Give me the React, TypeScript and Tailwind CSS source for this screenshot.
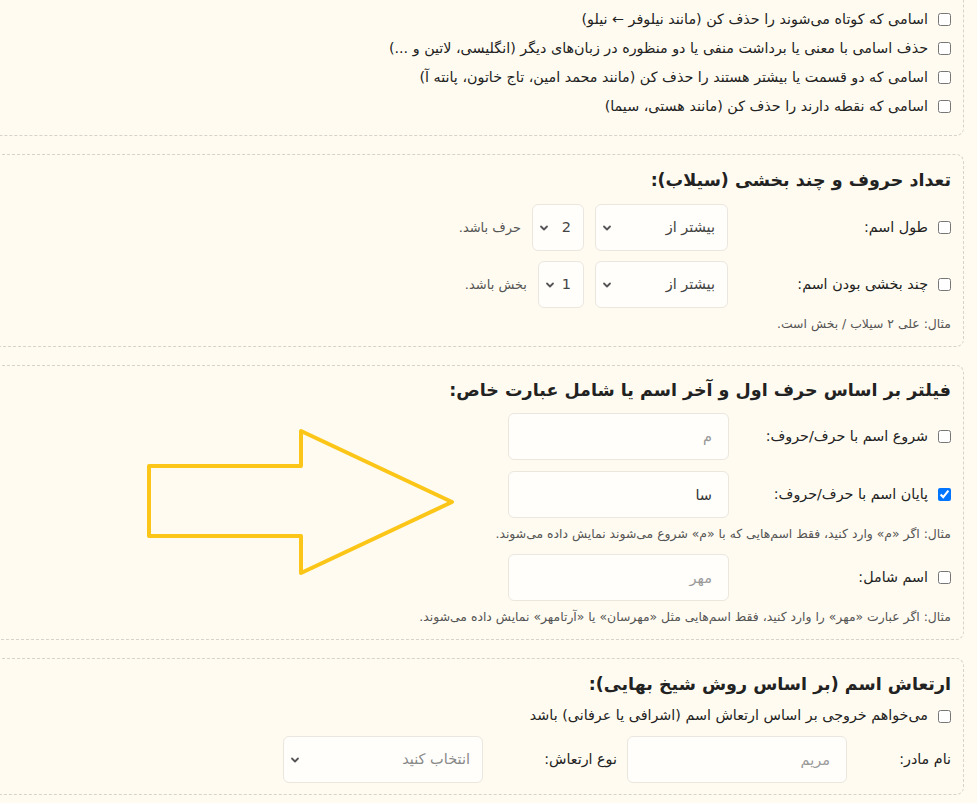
import React from 'react';

const Chevron = () => (
  <svg className="pointer-events-none absolute left-[7px] top-1/2 -translate-y-1/2 h-[10px] w-[10px] text-[#555]" viewBox="0 0 10 10" fill="none">
    <path d="M2 3.5 L5 6.5 L8 3.5" stroke="currentColor" strokeWidth="1.8" strokeLinecap="round" strokeLinejoin="round" />
  </svg>
);

function SelectBox({ value, width, placeholder }: { value: string; width: string; placeholder?: boolean }) {
  return (
    <div className={`relative ${width}`}>
      <select
        defaultValue={value}
        className={`appearance-none w-full h-[47px] rounded-md border border-[#ebe7df] bg-[#fffefb] pr-3 pl-6 text-[14.5px] outline-none ${
          placeholder ? 'text-[#888]' : 'text-[#444]'
        }`}
      >
        <option value={value}>{value}</option>
      </select>
      <Chevron />
    </div>
  );
}

function TextBox({ value, placeholder, width = 'w-[221px]' }: { value?: string; placeholder?: string; width?: string }) {
  return (
    <input
      type="text"
      defaultValue={value}
      placeholder={placeholder}
      className={`${width} h-[47px] rounded-md border border-[#ebe7df] bg-[#fffefb] pr-4 pl-3 text-[14.5px] text-[#333] placeholder:text-[#9a9a9a] outline-none`}
    />
  );
}

function Check({ checked }: { checked?: boolean }) {
  return <input type="checkbox" defaultChecked={checked} className="m-0 h-[13px] w-[13px] shrink-0" />;
}

const sectionCls = 'border border-dashed border-[#d6d3cc] rounded-lg px-3';

export default function App() {
  const removeOptions = [
    'اسامی که کوتاه می‌شوند را حذف کن (مانند نیلوفر ← نیلو)',
    'حذف اسامی با معنی یا برداشت منفی یا دو منظوره در زبان‌های دیگر (انگلیسی، لاتین و ...)',
    'اسامی که دو قسمت یا بیشتر هستند را حذف کن (مانند محمد امین، تاج خاتون، پانته آ)',
    'اسامی که نقطه دارند را حذف کن (مانند هستی، سیما)',
  ];

  return (
    <div
      dir="rtl"
      className="relative h-[803px] overflow-hidden bg-[#fffbf0] text-[#222] text-[14.3px]"
      style={{ fontFamily: '"DejaVu Sans", "Noto Sans", sans-serif' }}
    >
      <div className="w-[1010px] mr-[13px] flex flex-col gap-[18px]">
        {/* Remove options */}
        <section className={`${sectionCls} border-t-0 rounded-t-none pt-[5px] pb-[14px]`}>
          {removeOptions.map((text) => (
            <label key={text} className="flex items-center gap-2.5 h-[29px]">
              <Check />
              <span>{text}</span>
            </label>
          ))}
        </section>

        {/* Length and syllables */}
        <section className={`${sectionCls} pt-[12px] pb-[13px]`}>
          <h3 className="text-[17.5px] font-bold leading-[26px]">تعداد حروف و چند بخشی (سیلاب):</h3>
          <div className="mt-[11px] flex items-center gap-[11px]">
            <label className="flex items-center gap-2.5 w-[212px]">
              <Check />
              <span>طول اسم:</span>
            </label>
            <SelectBox value="بیشتر از" width="w-[133px]" />
            <SelectBox value="2" width="w-[52px]" />
            <span className="text-[13px] text-[#555]">حرف باشد.</span>
          </div>
          <div className="mt-[10px] flex items-center gap-[11px]">
            <label className="flex items-center gap-2.5 w-[212px]">
              <Check />
              <span>چند بخشی بودن اسم:</span>
            </label>
            <SelectBox value="بیشتر از" width="w-[133px]" />
            <SelectBox value="1" width="w-[46px]" />
            <span className="text-[13px] text-[#555]">بخش باشد.</span>
          </div>
          <p className="mt-[7px] text-[12.4px] leading-[18px] text-[#555]">مثال: علی ۲ سیلاب / بخش است.</p>
        </section>

        {/* First / last letter */}
        <section className={`${sectionCls} pt-[11px] pb-[13px]`}>
          <h3 className="text-[17.5px] font-bold leading-[26px]">فیلتر بر اساس حرف اول و آخر اسم یا شامل عبارت خاص:</h3>
          <div className="mt-[10px] flex items-center gap-[11px]">
            <label className="flex items-center gap-2.5 w-[211px]">
              <Check />
              <span>شروع اسم با حرف/حروف:</span>
            </label>
            <TextBox placeholder="م" />
          </div>
          <div className="mt-[11px] flex items-center gap-[11px]">
            <label className="flex items-center gap-2.5 w-[211px]">
              <Check checked />
              <span>پایان اسم با حرف/حروف:</span>
            </label>
            <TextBox value="سا" />
          </div>
          <p className="mt-[7px] text-[12.4px] leading-[18px] text-[#555]">
            مثال: اگر «م» وارد کنید، فقط اسم‌هایی که با «م» شروع می‌شوند نمایش داده می‌شوند.
          </p>
          <div className="mt-[11px] flex items-center gap-[11px]">
            <label className="flex items-center gap-2.5 w-[211px]">
              <Check />
              <span>اسم شامل:</span>
            </label>
            <TextBox placeholder="مهر" />
          </div>
          <p className="mt-[7px] text-[12.4px] leading-[18px] text-[#555]">
            مثال: اگر عبارت «مهر» را وارد کنید، فقط اسم‌هایی مثل «مهرسان» یا «آرتامهر» نمایش داده می‌شوند.
          </p>
        </section>

        {/* Name vibration */}
        <section className={`${sectionCls} pt-[12px] pb-[11px]`}>
          <h3 className="text-[17.5px] font-bold leading-[26px]">ارتعاش اسم (بر اساس روش شیخ بهایی):</h3>
          <label className="mt-[8px] flex items-center gap-2.5 h-[22px]">
            <Check />
            <span>می‌خواهم خروجی بر اساس ارتعاش اسم (اشرافی یا عرفانی) باشد</span>
          </label>
          <div className="mt-[9px] flex items-center gap-[10px]">
            <span className="w-[94px]">نام مادر:</span>
            <TextBox placeholder="مریم" width="w-[220px]" />
            <span className="w-[124px]">نوع ارتعاش:</span>
            <SelectBox value="انتخاب کنید" width="w-[200px]" placeholder />
          </div>
        </section>
      </div>

      {/* Highlight arrow */}
      <svg className="pointer-events-none absolute left-0 top-0" width="977" height="803" viewBox="0 0 977 803" fill="none">
        <polygon
          points="149,466 301,466 301,431 452,502 301,573 301,536 149,536"
          stroke="#fbc617"
          strokeWidth="4"
          strokeLinejoin="round"
        />
      </svg>
    </div>
  );
}
